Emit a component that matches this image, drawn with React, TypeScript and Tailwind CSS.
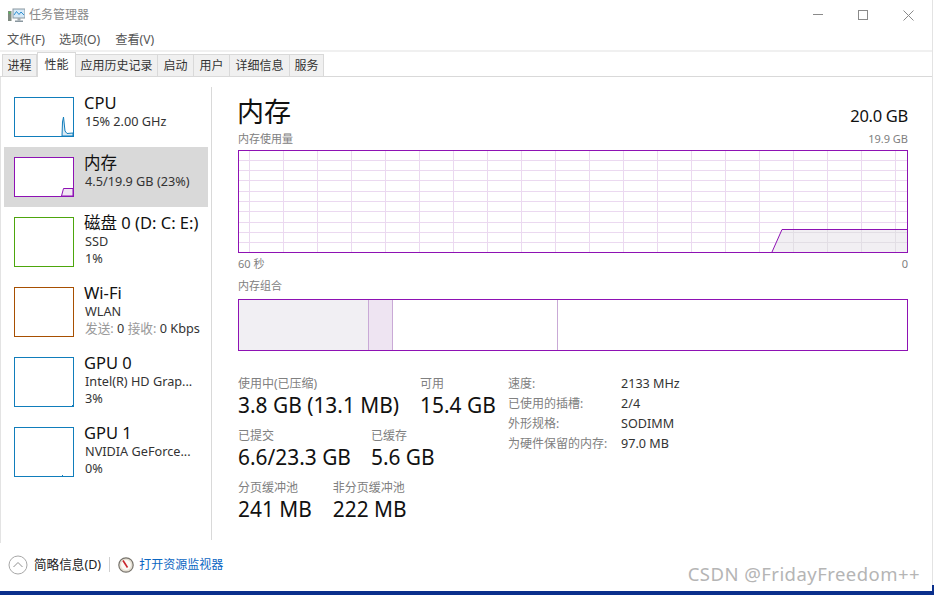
const sans = "font-['Noto_Sans','Noto_Sans_CJK_SC',sans-serif]";

function Thumb({ color, h, children }: { color: string; h: string; children?: React.ReactNode }) {
  return (
    <div className={`relative w-[60px] shrink-0 border bg-white ${h}`} style={{ borderColor: color }}>
      {children}
    </div>
  );
}

function SideItem({
  color,
  h,
  title,
  lines,
  selected,
  children,
  cls,
}: {
  color: string;
  h: string;
  title: string;
  lines: React.ReactNode[];
  selected?: boolean;
  children?: React.ReactNode;
  cls: string;
}) {
  return (
    <div className={`flex gap-[10px] pl-[10px] pt-[10px] w-[204px] ${cls} ${selected ? "bg-[#d9d9d9]" : ""}`}>
      <Thumb color={color} h={h}>{children}</Thumb>
      <div className="min-w-0 -mt-[4px]">
        <div className="text-[16.5px] leading-[19px] text-[#111] whitespace-nowrap">{title}</div>
        <div className="mt-[1px]">
          {lines.map((l, i) => (
            <div key={i} className="ml-[1px] text-[12.7px] leading-[17px] text-[#333] whitespace-nowrap">{l}</div>
          ))}
        </div>
      </div>
    </div>
  );
}

function Stat({ label, value }: { label: string; value: string }) {
  return (
    <div>
      <div className="text-[12px] leading-[16px] text-[#808080] whitespace-nowrap">{label}</div>
      <div className="text-[20.9px] leading-[26px] text-[#111] whitespace-nowrap">{value}</div>
    </div>
  );
}

function Prop({ k, v }: { k: string; v: string }) {
  return (
    <div className="flex h-[20px] items-center">
      <div className="w-[113px] text-[12px] text-[#808080] whitespace-nowrap">{k}</div>
      <div className="text-[12.6px] text-[#333] whitespace-nowrap">{v}</div>
    </div>
  );
}

const tabs = [
  ["进程", "w-[35px]"],
  ["性能", "w-[39px]"],
  ["应用历史记录", "w-[82px]"],
  ["启动", "w-[36px]"],
  ["用户", "w-[36px]"],
  ["详细信息", "w-[60px]"],
  ["服务", "w-[34px]"],
];

function UsageChart() {
  const vs = [11, 45, 79, 113, 147, 181, 215, 249, 283, 317, 351, 385, 419, 453, 487, 521, 555, 589, 623, 657];
  const hs = [10, 20, 30, 41, 51, 61, 72, 82, 92];
  const grid = (stroke: string) => (
    <>
      {vs.map((x) => (
        <line key={x} x1={x + 0.5} y1="0" x2={x + 0.5} y2="103" stroke={stroke} strokeWidth="1" />
      ))}
      {hs.map((y) => (
        <line key={y} x1="0" y1={y + 0.5} x2="670" y2={y + 0.5} stroke={stroke} strokeWidth="1" />
      ))}
    </>
  );
  return (
    <svg width="670" height="103" viewBox="0 0 670 103" className="block">
      <defs>
        <clipPath id="usage-area">
          <polygon points="534,102 544,80 669,80 669,102" />
        </clipPath>
      </defs>
      <rect x="0" y="0" width="670" height="103" fill="#fff" />
      {grid("#ebd9f0")}
      <polygon points="534,102 544,80 669,80 669,102" fill="#f1eff3" />
      <g clipPath="url(#usage-area)">{grid("#e2dee5")}</g>
      <polyline points="534,102 544,79.5 669,79.5" fill="none" stroke="#8e12b4" strokeWidth="1" />
      <rect x="0.5" y="0.5" width="669" height="102" fill="none" stroke="#8e12b4" strokeWidth="1" />
    </svg>
  );
}

export default function App() {
  return (
    <div className={`relative w-[934px] h-[595px] bg-white overflow-hidden flex flex-col ${sans}`}>
      <div className="w-[933px] flex-1 border-r border-[#e3e3e3] flex flex-col min-h-0">
        <div className="h-[30px] flex items-center shrink-0">
          <svg width="18" height="16" viewBox="0 0 18 16" className="ml-[7px]">
            <rect x="1" y="4" width="3.5" height="10" fill="#7f8a80" />
            <rect x="1.8" y="5" width="1.8" height="1.5" fill="#4cc04c" />
            <rect x="6" y="2" width="12" height="9" fill="#d6e9f7" stroke="#8a979f" strokeWidth="1" />
            <path d="M7 8 L9.5 4.5 L12 7.5 L14 5 L17 8" fill="none" stroke="#2f8fd0" strokeWidth="1" />
            <rect x="10.5" y="11" width="3" height="2.5" fill="#a4adb3" />
            <rect x="8" y="13.5" width="8" height="1.5" fill="#8a979f" />
          </svg>
          <div className="ml-[4px] text-[12px] text-[#8a8a8a]">任务管理器</div>
          <div className="ml-auto flex items-center mr-[18px]">
            <svg width="10" height="10" viewBox="0 0 10 10"><line x1="0" y1="4.5" x2="10" y2="4.5" stroke="#8a8a8a" /></svg>
            <svg width="11" height="11" viewBox="0 0 11 11" className="ml-[35px]"><rect x="0.5" y="0.5" width="9" height="9" fill="none" stroke="#8a8a8a" /></svg>
            <svg width="11" height="11" viewBox="0 0 11 11" className="ml-[34px]"><path d="M0.5 0.5 L10.5 10.5 M10.5 0.5 L0.5 10.5" stroke="#8a8a8a" fill="none" /></svg>
          </div>
        </div>

        <div className="h-[19px] flex items-center gap-[14px] pl-[7px] pt-[1px] text-[12.2px] text-[#555] shrink-0 border-b-2 border-[#f0f0f0] box-content">
          <span>文件(F)</span>
          <span>选项(O)</span>
          <span className="ml-[1px]">查看(V)</span>
        </div>

        <div className="h-[24px] flex items-end pl-[2px] border-b border-[#d9d9d9] shrink-0 box-content">
          {tabs.map(([t, w], i) =>
            i === 1 ? (
              <div key={t} className={`${w} h-[25px] -mb-[1px] bg-white border border-b-0 border-[#d9d9d9] flex items-center justify-center text-[12px] text-[#333]`}>{t}</div>
            ) : (
              <div key={t} className={`${w} h-[22px] bg-[#f0f0f0] border border-b-0 border-l-0 first:border-l border-[#d9d9d9] flex items-center justify-center text-[12px] text-[#333]`}>{t}</div>
            )
          )}
        </div>

        <div className="flex h-[466px] shrink-0 pt-[10px] border-l border-[#e3e3e3]">
          <div className="w-[211px] shrink-0 h-[453px] border-r border-[#d9d9d9] pl-[3px]">
            <SideItem cls="h-[60px]" color="#117dbb" h="h-[40px]" title="CPU" lines={["15% 2.00 GHz"]}>
              <svg width="58" height="38" viewBox="0 0 58 38" className="absolute inset-0">
                <path d="M47 38 L47.5 24 L48.5 19 L50 33 L52 35.5 L58 35 L58 38 Z" fill="#d9eaf5" stroke="#117dbb" strokeWidth="1" />
              </svg>
            </SideItem>
            <SideItem selected cls="h-[60px]" color="#8e12b4" h="h-[40px]" title="内存" lines={["4.5/19.9 GB (23%)"]}>
              <svg width="58" height="38" viewBox="0 0 58 38" className="absolute inset-0">
                <path d="M46.5 38 L48.5 30.5 L58 30.5 L58 38 Z" fill="#f1e6f4" stroke="#8e12b4" strokeWidth="1" />
              </svg>
            </SideItem>
            <SideItem cls="h-[70px]" color="#4da60c" h="h-[50px]" title="磁盘 0 (D: C: E:)" lines={["SSD", "1%"]} />
            <SideItem cls="h-[70px]" color="#a74f01" h="h-[50px]" title="Wi-Fi" lines={["WLAN", <span key="x"><span className="text-[#999]">发送:</span> 0 <span className="text-[#999]">接收:</span> 0 Kbps</span>]} />
            <SideItem cls="h-[70px]" color="#117dbb" h="h-[50px]" title="GPU 0" lines={["Intel(R) HD Grap...", "3%"]}>
              <div className="absolute right-0 bottom-0 w-px h-px bg-[#117dbb]" />
            </SideItem>
            <SideItem cls="h-[70px]" color="#117dbb" h="h-[50px]" title="GPU 1" lines={["NVIDIA GeForce...", "0%"]}>
              <div className="absolute right-[10px] bottom-0 w-px h-px bg-[#117dbb]" />
            </SideItem>
          </div>

          <div className="ml-[26px] w-[670px] shrink-0">
            <div className="flex items-end justify-between h-[43px]">
              <div className="-ml-[1px] text-[27px] leading-[36px] text-[#111]">内存</div>
              <div className="text-[16.5px] tracking-[-0.3px] leading-[24px] text-[#111] mb-[2px]">20.0 GB</div>
            </div>
            <div className="flex justify-between text-[11px] leading-[16px] text-[#808080] mt-[1px] mb-[3px]">
              <span>内存使用量</span>
              <span>19.9 GB</span>
            </div>
            <UsageChart />
            <div className="flex justify-between text-[11px] leading-[16px] text-[#808080] mt-[3px]">
              <span>60 秒</span>
              <span>0</span>
            </div>
            <div className="text-[11px] leading-[16px] text-[#808080] mt-[6px] mb-[5px]">内存组合</div>
            <div className="flex h-[52px] border border-[#8e12b4]">
              <div className="w-[130px] bg-[#f1eff3] border-r border-[#c9a9d6]" />
              <div className="w-[24px] bg-[#eee4f2] border-r border-[#c9a9d6]" />
              <div className="w-[165px] bg-white border-r border-[#c9a9d6]" />
              <div className="flex-1 bg-white" />
            </div>
            <div className="flex mt-[25px]">
              <div className="w-[270px] shrink-0 flex flex-col gap-[10px]">
                <div className="flex gap-[21px]">
                  <Stat label="使用中(已压缩)" value="3.8 GB (13.1 MB)" />
                  <Stat label="可用" value="15.4 GB" />
                </div>
                <div className="flex gap-[20px]">
                  <Stat label="已提交" value="6.6/23.3 GB" />
                  <Stat label="已缓存" value="5.6 GB" />
                </div>
                <div className="flex gap-[21px]">
                  <Stat label="分页缓冲池" value="241 MB" />
                  <Stat label="非分页缓冲池" value="222 MB" />
                </div>
              </div>
              <div className="-mt-[2px]">
                <Prop k="速度:" v="2133 MHz" />
                <Prop k="已使用的插槽:" v="2/4" />
                <Prop k="外形规格:" v="SODIMM" />
                <Prop k="为硬件保留的内存:" v="97.0 MB" />
              </div>
            </div>
          </div>
        </div>

        <div className="flex-1 min-h-0 flex items-start pt-[12px] pl-[8px]">
          <svg width="20" height="20" viewBox="0 0 20 20">
            <circle cx="10" cy="10" r="9" fill="#fff" stroke="#a8a8a8" strokeWidth="1" />
            <path d="M5.5 12 L10 7.5 L14.5 12" fill="none" stroke="#909090" strokeWidth="1" />
          </svg>
          <span className="ml-[6px] mt-[1px] text-[12.6px] leading-[18px] text-[#222]">简略信息(D)</span>
          <div className="ml-[8px] mt-[2px] w-px h-[15px] bg-[#cfcfcf]" />
          <svg width="16" height="16" viewBox="0 0 16 16" className="ml-[8px] mt-[2px]">
            <circle cx="8" cy="8" r="7.2" fill="#e6e0d4" stroke="#77736c" strokeWidth="1.2" />
            <circle cx="8" cy="8" r="5" fill="#fbf9f5" />
            <path d="M5 3.5 L9.5 10.5" stroke="#c8242b" strokeWidth="1.6" />
          </svg>
          <span className="ml-[5px] mt-[1px] text-[12px] leading-[18px] text-[#0a66c2]">打开资源监视器</span>
        </div>
      </div>
      <div className="h-[4px] shrink-0 bg-[#0a2f8c]" />
      <div className="absolute right-0 bottom-[4px] w-[2px] h-[6px] bg-[#0a2f8c]" />
      <div className="absolute right-[14px] top-[561px] text-[18.5px] leading-[26px] tracking-[0.45px] text-[#b5b5b5]">CSDN @FridayFreedom++</div>
    </div>
  );
}
